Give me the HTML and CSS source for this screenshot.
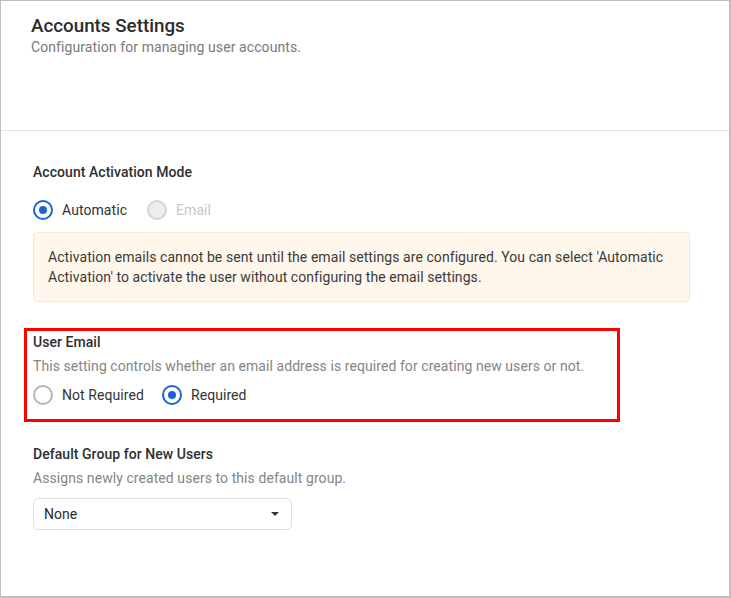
FILE: index.html
```html
<!DOCTYPE html>
<html>
<head>
<meta charset="utf-8">
<link rel="stylesheet" href="styles.css">
</head>
<body>
<div class="frame">
  <div class="header">
    <div class="title">Accounts Settings</div>
    <div class="subtitle">Configuration for managing user accounts.</div>
  </div>
  <div class="content">
    <div class="label first">Account Activation Mode</div>
    <div class="radios r1">
      <span class="radio checked"></span><span class="rlabel">Automatic</span>
      <span class="radio disabled"></span><span class="rlabel dis">Email</span>
    </div>
    <div class="info">Activation emails cannot be sent until the email settings are configured. You can select 'Automatic Activation' to activate the user without configuring the email settings.</div>
    <div class="highlight">
      <div class="label">User Email</div>
      <div class="desc">This setting controls whether an email address is required for creating new users or not.</div>
      <div class="radios r2">
        <span class="radio"></span><span class="rlabel">Not Required</span>
        <span class="radio checked"></span><span class="rlabel">Required</span>
      </div>
    </div>
    <div class="label g">Default Group for New Users</div>
    <div class="desc">Assigns newly created users to this default group.</div>
    <div class="select"><span>None</span><span class="caret"></span></div>
  </div>
</div>
</body>
</html>
```
FILE: styles.css
```css
html, body { margin: 0; padding: 0; background: #fff; }
body { font-family: Roboto, "Liberation Sans", sans-serif; color: #333; }
.frame {
  width: 731px; height: 598px; box-sizing: border-box;
  border: 1px solid #bfbfbf; border-right-width: 2px; border-bottom-width: 2px;
  overflow: hidden;
}
.header {
  height: 130px; box-sizing: border-box;
  border-bottom: 1px solid #e2e2e2;
  padding: 13px 0 0 30px;
}
.title { font-size: 18.8px; line-height: 24px; font-weight: 500; color: #2b2b2b; }
.subtitle { font-size: 14px; line-height: 18px; color: #7a7a7a; letter-spacing: 0.09px; }
.content { padding: 31px 0 0 32px; }
.label { font-size: 14px; line-height: 20px; font-weight: 500; color: #2e2e2e; letter-spacing: 0.05px; }
.desc { font-size: 14px; line-height: 20px; color: #858585; margin-top: 4px; letter-spacing: 0.07px; }
.radios { display: flex; align-items: center; height: 20px; font-size: 14px; letter-spacing: 0.07px; }
.r1 { margin-top: 18px; }
.r2 { margin-top: 9px; }
.radio {
  width: 20px; height: 20px; box-sizing: border-box; border-radius: 50%;
  border: 2px solid #b5b5b5; background: #fff; position: relative; flex: none;
}
.radio.checked { border-color: #1a63d6; }
.radio.checked::after {
  content: ""; position: absolute; left: 4px; top: 4px; width: 8px; height: 8px;
  border-radius: 50%; background: #1a63d6;
}
.radio.disabled { border-color: #d4d4d4; background: #eeeeee; }
.rlabel { margin-left: 9px; margin-right: 20px; color: #333; }
.r2 .rlabel { margin-right: 18px; }
.rlabel.dis { color: #c6c6c6; }
.info {
  margin-top: 12px; width: 657px; box-sizing: border-box;
  background: #fff7ec; border: 1px solid #fbe8cc; border-radius: 4px;
  padding: 14px 14px; font-size: 14px; line-height: 20px; color: #3a3a3a; letter-spacing: 0.07px;
}
.highlight {
  margin: 26px 0 0 -9px; width: 596px; height: 94px; box-sizing: border-box;
  border: 3px solid #ff0000; padding: 1px 0 0 6px;
}
.label.g { margin-top: 22px; }
.select {
  margin-top: 10px; width: 259px; height: 32px; box-sizing: border-box;
  border: 1px solid #e0e0e0; border-radius: 5px;
  display: flex; align-items: center; justify-content: space-between;
  padding: 0 12px 0 10px; font-size: 14px; color: #2b2b2b;
}
.caret {
  width: 0; height: 0; border-left: 4px solid transparent; border-right: 4px solid transparent;
  border-top: 4px solid #333;
}
```
